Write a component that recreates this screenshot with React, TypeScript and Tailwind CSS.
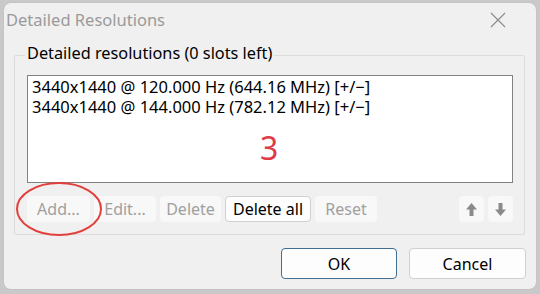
import React from "react";

const font = { fontFamily: '"Noto Sans", "Open Sans", sans-serif' };

function Arrow({ up }: { up: boolean }) {
  return (
    <svg width="13" height="15" viewBox="0 0 13 15" style={{ transform: up ? "none" : "rotate(180deg)" }}>
      <path d="M6.5 1 L12 7.5 L8.5 7.5 L8.5 14 L4.5 14 L4.5 7.5 L1 7.5 Z" fill="#8a8a8a" />
    </svg>
  );
}

export default function App() {
  return (
    <div className="w-[540px] h-[294px] bg-[#c9c9c9] overflow-hidden relative" style={font}>
      <div className="absolute left-[3px] top-[2px] w-[534px] h-[288px] bg-[#f0f0f0] rounded-[8px] border border-[#c4c4c4] flex flex-col">
        {/* title bar */}
        <div className="flex items-center justify-between h-[34px] pl-[2px] pr-[30px]">
          <span className="text-[16.5px] text-[#9a9a9a] leading-none mt-[1px]">Detailed Resolutions</span>
          <svg width="16" height="16" viewBox="0 0 16 16">
            <path d="M1 1 L15 15 M15 1 L1 15" stroke="#8c8c8c" strokeWidth="1.2" />
          </svg>
        </div>
        {/* group box */}
        <div className="relative ml-[10px] mr-[11px] mt-[18px] h-[180px] border border-[#dcdcdc] rounded-[2px]">
          <span className="absolute left-[10px] top-[-13px] bg-[#f0f0f0] px-[2px] text-[16.3px] leading-[20px] text-black">
            Detailed resolutions (0 slots left)
          </span>
          <div className="mt-[19px] ml-[12px] mr-[11px] h-[108px] bg-white border border-[#828282] relative">
            <div className="pl-[4px] pt-[1px] text-[16.5px] leading-[20px] text-black">
              <div>3440x1440 @ 120.000 Hz (644.16 MHz) [+/−]</div>
              <div>3440x1440 @ 144.000 Hz (782.12 MHz) [+/−]</div>
            </div>
            <span className="absolute left-[232px] top-[56px] text-[32px] leading-none text-[#e03a48]">3</span>
          </div>
          <div className="flex items-center mt-[13px] ml-[12px] mr-[11px] h-[26px] text-[16px]">
            <div className="flex gap-[4px]">
              <div className="w-[63px] h-[26px] rounded-[4px] bg-[#f8f8f8] text-[#a0a0a0] flex items-center justify-center">Add...</div>
              <div className="w-[62px] h-[26px] rounded-[4px] bg-[#f8f8f8] text-[#a0a0a0] flex items-center justify-center">Edit...</div>
              <div className="w-[61px] h-[26px] rounded-[4px] bg-[#f8f8f8] text-[#a0a0a0] flex items-center justify-center">Delete</div>
              <div className="w-[86px] h-[26px] rounded-[4px] bg-[#fdfdfd] border border-[#d0d0d0] text-black flex items-center justify-center">Delete all</div>
              <div className="w-[62px] h-[26px] rounded-[4px] bg-[#f8f8f8] text-[#a0a0a0] flex items-center justify-center">Reset</div>
            </div>
            <div className="ml-auto flex gap-[4px]">
              <div className="w-[25px] h-[26px] rounded-[4px] bg-[#f8f8f8] flex items-center justify-center"><Arrow up /></div>
              <div className="w-[25px] h-[26px] rounded-[4px] bg-[#f8f8f8] flex items-center justify-center"><Arrow up={false} /></div>
            </div>
          </div>
        </div>
        {/* bottom buttons */}
        <div className="flex justify-end gap-[12px] mt-[13px] pr-[10px] text-[16px]">
          <div className="w-[116px] h-[31px] rounded-[4px] bg-[#fdfdfd] border border-[#3f6f94] flex items-center justify-center text-black">OK</div>
          <div className="w-[117px] h-[31px] rounded-[4px] bg-[#fdfdfd] border border-[#d0d0d0] flex items-center justify-center text-black">Cancel</div>
        </div>
      </div>
      {/* red annotation circle */}
      <svg className="absolute left-[15px] top-[181px]" width="90" height="58" viewBox="0 0 90 58">
        <ellipse cx="44" cy="28" rx="42" ry="26" fill="none" stroke="#e2403c" strokeWidth="2" />
      </svg>
    </div>
  );
}
